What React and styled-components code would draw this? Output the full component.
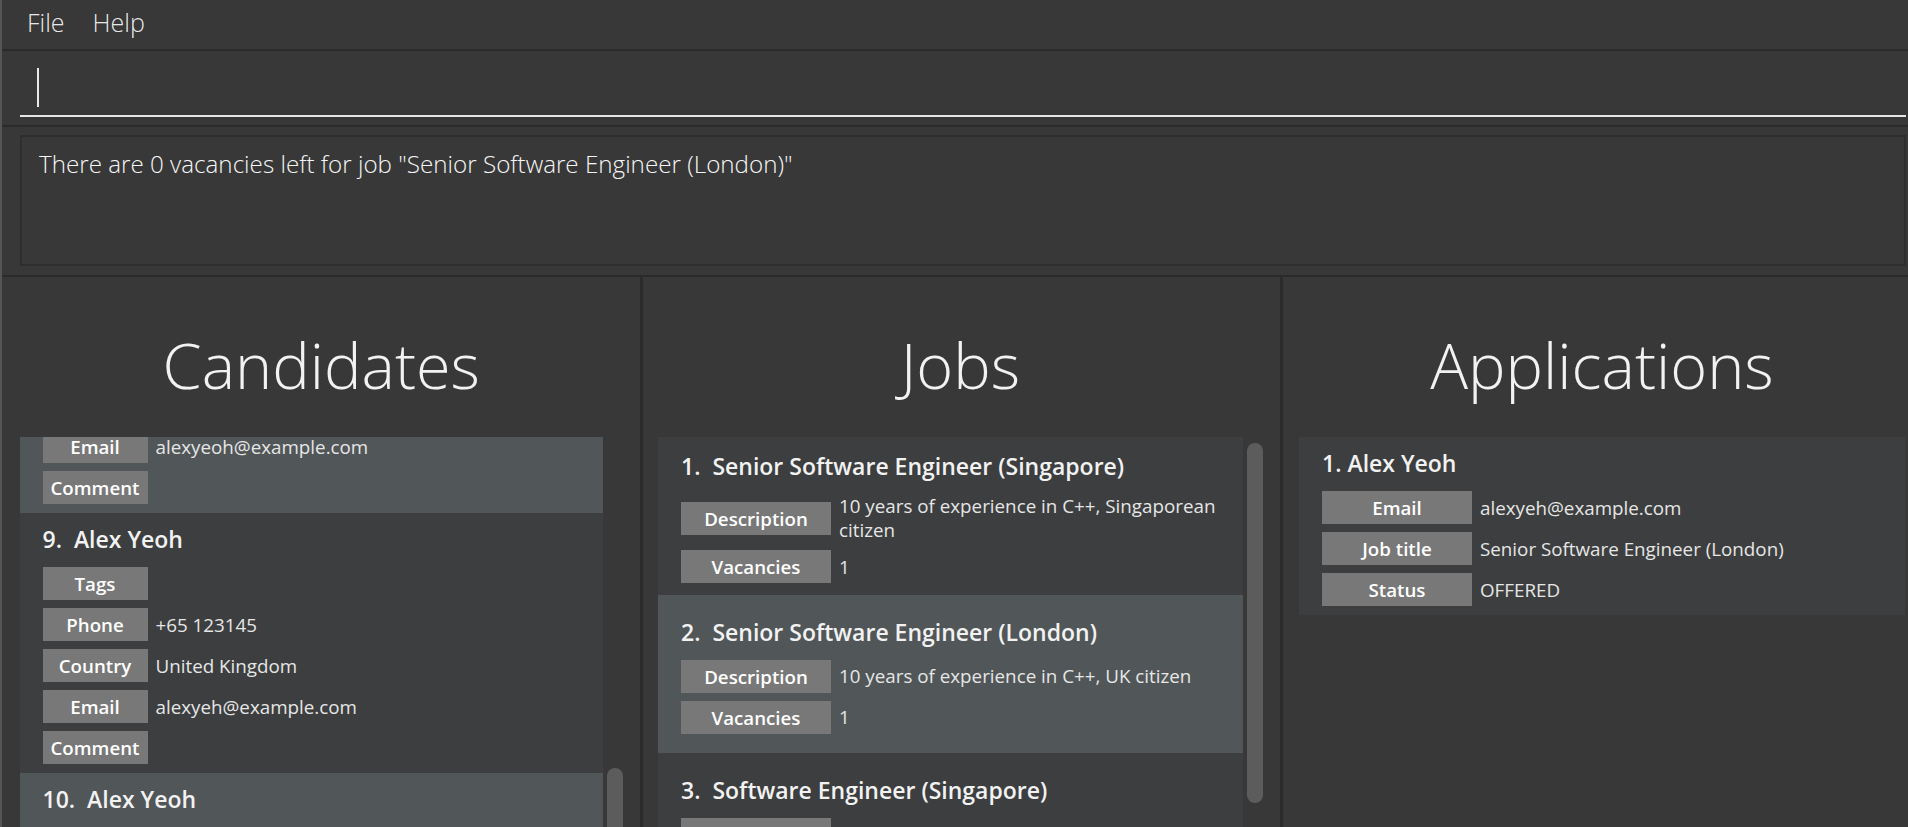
import React from 'react';
import styled, { createGlobalStyle } from 'styled-components';

const GlobalStyle = createGlobalStyle`
  html, body { margin: 0; padding: 0; background: #383838; }
  body { font-family: "Open Sans", "Noto Sans", sans-serif; }
  * { box-sizing: border-box; }
`;

const Window = styled.div`
  width: 1908px;
  height: 827px;
  overflow: hidden;
  background: #383838;
  border-left: 2px solid #555555;
  display: flex;
  flex-direction: column;
  color: #f0f0f0;
`;

const MenuBar = styled.div`
  height: 51px;
  flex-shrink: 0;
  display: flex;
  align-items: center;
  gap: 28px;
  padding: 0 0 5px 25px;
  border-bottom: 2px solid #2b2b2b;
`;

const MenuItem = styled.span`
  font-size: 25px;
  font-weight: 300;
  line-height: 1;
  color: rgba(255, 255, 255, 0.9);
`;

const CommandBox = styled.div`
  flex-shrink: 0;
  padding: 9px 2px 8px 18px;
  border-bottom: 2px solid #2b2b2b;
`;

const CommandInput = styled.div`
  height: 57px;
  display: flex;
  align-items: center;
  border-bottom: 2px solid #e6e6e6;
`;

const Caret = styled.span`
  width: 2px;
  height: 39px;
  margin-left: 17px;
  background: #e8e8e8;
`;

const ResultArea = styled.div`
  flex-shrink: 0;
  padding: 8px 2px 9px 17.5px;
  border-bottom: 2px solid #2b2b2b;
`;

const ResultBox = styled.div`
  height: 131px;
  border: 2px solid #2e2e2e;
  padding: 11px 0 0 17.5px;
  font-size: 24.2px;
  font-weight: 300;
  line-height: 32px;
  color: #f6f6f6;
`;

const PanelsRow = styled.div`
  flex: 1;
  min-height: 0;
  width: 1918px;
  display: flex;
`;

const Panel = styled.section`
  width: ${(p) => (p.$first ? 638 : 640)}px;
  flex-shrink: 0;
  display: flex;
  flex-direction: column;
  min-height: 0;
  border-left: ${(p) => (p.$first ? 'none' : '3px solid #2b2b2b')};
  padding: 0 ${(p) => p.$padR}px 0 ${(p) => p.$padL}px;
`;

const PanelTitle = styled.h1`
  margin: 0;
  padding: 48px 0 32px;
  font-size: 63px;
  font-weight: 300;
  line-height: 80px;
  text-align: center;
  color: #f2f2f2;
`;

const ListRow = styled.div`
  flex: 1;
  min-height: 0;
  display: flex;
  gap: 4px;
`;

const ListViewport = styled.div`
  flex: 1;
  min-width: 0;
  overflow: hidden;
`;

const ListContent = styled.div`
  margin-top: ${(p) => p.$offset || 0}px;
  display: flex;
  flex-direction: column;
`;

const Card = styled.div`
  background: ${(p) => (p.$odd ? '#515658' : '#3c3e3f')};
  padding: 9px 23px;
  min-height: ${(p) => p.$minH || 0}px;
  display: flex;
  flex-direction: column;
  justify-content: center;
`;

const CardTitle = styled.div`
  font-size: 23px;
  font-weight: 600;
  line-height: 34px;
  white-space: pre;
  color: #f2f2f2;
  margin-bottom: 11px;
`;

const Fields = styled.div`
  display: flex;
  flex-direction: column;
  gap: 8px;
`;

const FieldRow = styled.div`
  display: flex;
  align-items: center;
  gap: 8px;
  min-height: 33px;
`;

const Badge = styled.span`
  width: ${(p) => p.$w}px;
  height: 33px;
  flex-shrink: 0;
  background: #787878;
  color: #ffffff;
  font-size: 18.7px;
  font-weight: 600;
  display: flex;
  align-items: center;
  justify-content: center;
`;

const Value = styled.span`
  flex: 1;
  min-width: 0;
  font-size: 18.8px;
  line-height: 24px;
  color: #e6e6e6;
`;

const ScrollTrack = styled.div`
  width: 16px;
  flex-shrink: 0;
`;

const Thumb = styled.div`
  margin-top: ${(p) => p.$top}px;
  height: ${(p) => p.$h}px;
  border-radius: 8px;
  background: #5c5c5c;
`;

const candidates = [
  {
    id: 8,
    name: 'Alex Yeoh',
    fields: [
      ['Tags', ''],
      ['Phone', '+65 123145'],
      ['Country', 'Singapore'],
      ['Email', 'alexyeoh@example.com'],
      ['Comment', ''],
    ],
  },
  {
    id: 9,
    name: 'Alex Yeoh',
    fields: [
      ['Tags', ''],
      ['Phone', '+65 123145'],
      ['Country', 'United Kingdom'],
      ['Email', 'alexyeh@example.com'],
      ['Comment', ''],
    ],
  },
  {
    id: 10,
    name: 'Alex Yeoh',
    fields: [
      ['Tags', ''],
      ['Phone', '+65 123145'],
      ['Country', 'United Kingdom'],
      ['Email', 'alexyeh@example.com'],
      ['Comment', ''],
    ],
  },
];

const jobs = [
  {
    id: 1,
    title: 'Senior Software Engineer (Singapore)',
    fields: [
      ['Description', '10 years of experience in C++, Singaporean citizen'],
      ['Vacancies', '1'],
    ],
  },
  {
    id: 2,
    title: 'Senior Software Engineer (London)',
    fields: [
      ['Description', '10 years of experience in C++, UK citizen'],
      ['Vacancies', '1'],
    ],
  },
  {
    id: 3,
    title: 'Software Engineer (Singapore)',
    fields: [
      ['Description', '3 years of experience in Java'],
      ['Vacancies', '2'],
    ],
  },
];

const applications = [
  {
    id: 1,
    name: 'Alex Yeoh',
    fields: [
      ['Email', 'alexyeh@example.com'],
      ['Job title', 'Senior Software Engineer (London)'],
      ['Status', 'OFFERED'],
    ],
  },
];

function EntryCard({ heading, fields, odd, badgeW, minH }) {
  return (
    <Card $odd={odd} $minH={minH}>
      <CardTitle>{heading}</CardTitle>
      <Fields>
        {fields.map(([label, value]) => (
          <FieldRow key={label}>
            <Badge $w={badgeW}>{label}</Badge>
            <Value>{value}</Value>
          </FieldRow>
        ))}
      </Fields>
    </Card>
  );
}

export default function App() {
  return (
    <>
      <GlobalStyle />
      <Window>
        <MenuBar>
          <MenuItem>File</MenuItem>
          <MenuItem>Help</MenuItem>
        </MenuBar>
        <CommandBox>
          <CommandInput>
            <Caret />
          </CommandInput>
        </CommandBox>
        <ResultArea>
          <ResultBox>There are 0 vacancies left for job "Senior Software Engineer (London)"</ResultBox>
        </ResultArea>
        <PanelsRow>
          <Panel $first $padL={17.5} $padR={17}>
            <PanelTitle>Candidates</PanelTitle>
            <ListRow>
              <ListViewport>
                <ListContent $offset={-184}>
                  {candidates.map((c) => (
                    <EntryCard
                      key={c.id}
                      heading={`${c.id}.  ${c.name}`}
                      fields={c.fields}
                      odd={c.id % 2 === 0}
                      badgeW={105}
                    />
                  ))}
                </ListContent>
              </ListViewport>
              <ScrollTrack>
                <Thumb $top={331} $h={200} />
              </ScrollTrack>
            </ListRow>
          </Panel>
          <Panel $padL={15} $padR={17}>
            <PanelTitle>Jobs</PanelTitle>
            <ListRow>
              <ListViewport>
                <ListContent>
                  {jobs.map((j) => (
                    <EntryCard
                      key={j.id}
                      heading={`${j.id}.  ${j.title}`}
                      fields={j.fields}
                      odd={j.id % 2 === 0}
                      badgeW={150}
                      minH={158}
                    />
                  ))}
                </ListContent>
              </ListViewport>
              <ScrollTrack>
                <Thumb $top={6} $h={360} />
              </ScrollTrack>
            </ListRow>
          </Panel>
          <Panel $padL={16} $padR={15}>
            <PanelTitle>Applications</PanelTitle>
            <ListRow>
              <ListViewport>
                <ListContent>
                  {applications.map((a) => (
                    <EntryCard
                      key={a.id}
                      heading={`${a.id}. ${a.name}`}
                      fields={a.fields}
                      odd={a.id % 2 === 0}
                      badgeW={150}
                    />
                  ))}
                </ListContent>
              </ListViewport>
            </ListRow>
          </Panel>
        </PanelsRow>
      </Window>
    </>
  );
}
